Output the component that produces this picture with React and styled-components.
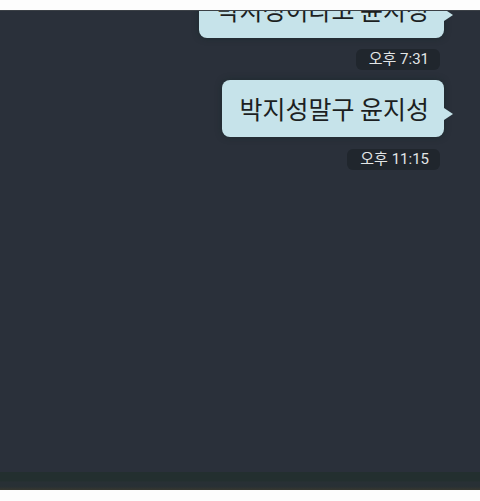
import React from "react";
import styled, { createGlobalStyle } from "styled-components";

const Global = createGlobalStyle`
  html, body { margin: 0; padding: 0; background: #fdfdfd; }
  body { font-family: "Noto Sans CJK KR", "Noto Sans", sans-serif; }
`;

const Page = styled.div`
  width: 480px;
  height: 501px;
  background: #fdfdfd;
  padding-top: 10px;
  box-sizing: border-box;
  overflow: hidden;
`;

const Screen = styled.div`
  height: 480px;
  background: #2a303a;
  border-top: 1px solid #3b4046;
  box-sizing: border-box;
  display: flex;
  flex-direction: column;
  overflow: hidden;
`;

const Chat = styled.div`
  flex: 1;
  display: flex;
  flex-direction: column;
  align-items: flex-end;
  padding-right: 36px;
`;

const Bubble = styled.div`
  position: relative;
  background: #c6e3ea;
  color: #1c1f22;
  font-family: "Noto Sans CJK KR", sans-serif;
  font-size: 25px;
  line-height: 57px;
  height: 57px;
  padding: 0 15px 0 17px;
  border-radius: 8px;
  margin-top: ${(p) => p.$top}px;
  white-space: nowrap;
  box-shadow: 0 0 6px rgba(20, 40, 38, 0.6);
  &::after {
    content: "";
    position: absolute;
    right: -9px;
    top: ${(p) => p.$tail}px;
    border-left: 9px solid #c6e3ea;
    border-top: 6px solid transparent;
    border-bottom: 6px solid transparent;
  }
`;

const Time = styled.div`
  margin-top: ${(p) => p.$top}px;
  margin-right: 4px;
  background: #20262d;
  color: #e2e5e6;
  font-family: Roboto, "Noto Sans CJK KR", sans-serif;
  font-size: 15px;
  line-height: 21px;
  padding: 0 11px 0 13px;
  border-radius: 6px;
  white-space: nowrap;
`;

const Footer = styled.div`
  height: 18px;
  background: linear-gradient(#232f2f 0%, #232f2f 50%, #283035 55%, #283035 80%, #36372f 100%);
`;

export default function App() {
  return (
    <>
      <Global />
      <Page>
        <Screen>
          <Chat>
            <Bubble $top={-30} $tail={28}>박지성이라고 윤지성</Bubble>
            <Time $top={11}>오후 7:31</Time>
            <Bubble $top={10} $tail={28}>박지성말구 윤지성</Bubble>
            <Time $top={12}>오후 11:15</Time>
          </Chat>
          <Footer />
        </Screen>
      </Page>
    </>
  );
}
